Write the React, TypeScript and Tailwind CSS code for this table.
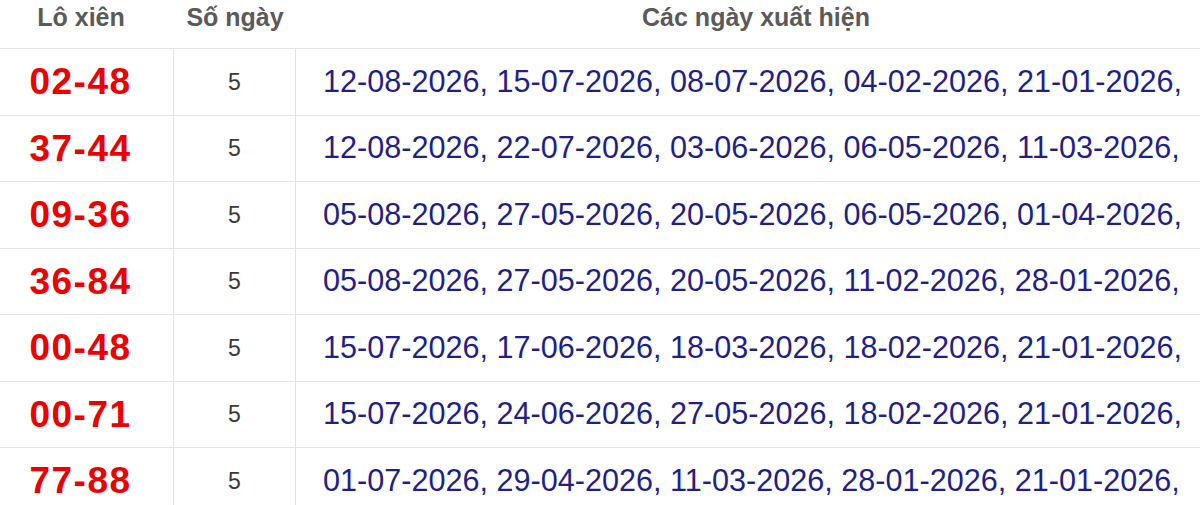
import React from "react";

const ROWS: { pair: string; count: number; dates: string[] }[] = [
  { pair: "02-48", count: 5, dates: ["12-08-2026", "15-07-2026", "08-07-2026", "04-02-2026", "21-01-2026"] },
  { pair: "37-44", count: 5, dates: ["12-08-2026", "22-07-2026", "03-06-2026", "06-05-2026", "11-03-2026"] },
  { pair: "09-36", count: 5, dates: ["05-08-2026", "27-05-2026", "20-05-2026", "06-05-2026", "01-04-2026"] },
  { pair: "36-84", count: 5, dates: ["05-08-2026", "27-05-2026", "20-05-2026", "11-02-2026", "28-01-2026"] },
  { pair: "00-48", count: 5, dates: ["15-07-2026", "17-06-2026", "18-03-2026", "18-02-2026", "21-01-2026"] },
  { pair: "00-71", count: 5, dates: ["15-07-2026", "24-06-2026", "27-05-2026", "18-02-2026", "21-01-2026"] },
  { pair: "77-88", count: 5, dates: ["01-07-2026", "29-04-2026", "11-03-2026", "28-01-2026", "21-01-2026"] },
];

export default function App() {
  return (
    <div
      className="h-[505px] w-[1200px] overflow-hidden bg-white"
      style={{ fontFamily: '"Liberation Sans", Arial, sans-serif' }}
    >
      <div className="w-[1216px]">
        {/* header */}
        <div className="grid h-[49px] grid-cols-[174px_122px_920px] border-b border-[#e3e3e3] text-[25px] font-bold text-[#5a5a5a]">
          <div className="pr-[12px] pt-[3px] text-center leading-[28px]">Lô xiên</div>
          <div className="pt-[3px] text-center leading-[28px]">Số ngày</div>
          <div className="pt-[3px] text-center leading-[28px]">Các ngày xuất hiện</div>
        </div>

        {ROWS.map((r) => (
          <div
            key={r.pair}
            className="grid h-[66.5px] grid-cols-[174px_122px_920px] border-b border-[#e3e3e3]"
          >
            <div className="flex items-center justify-center border-r border-[#e3e3e3] pr-[12px] text-[37px] font-bold tracking-[1.5px] text-[#ee0000]">
              {r.pair}
            </div>
            <div className="flex items-center justify-center border-r border-[#e3e3e3] text-[23px] text-[#3a3a3a]">
              {r.count}
            </div>
            <div className="flex items-center whitespace-nowrap pl-[27px] text-[30.6px] text-[#1f1f8a]">
              {r.dates.join(", ")},
            </div>
          </div>
        ))}
      </div>
    </div>
  );
}
